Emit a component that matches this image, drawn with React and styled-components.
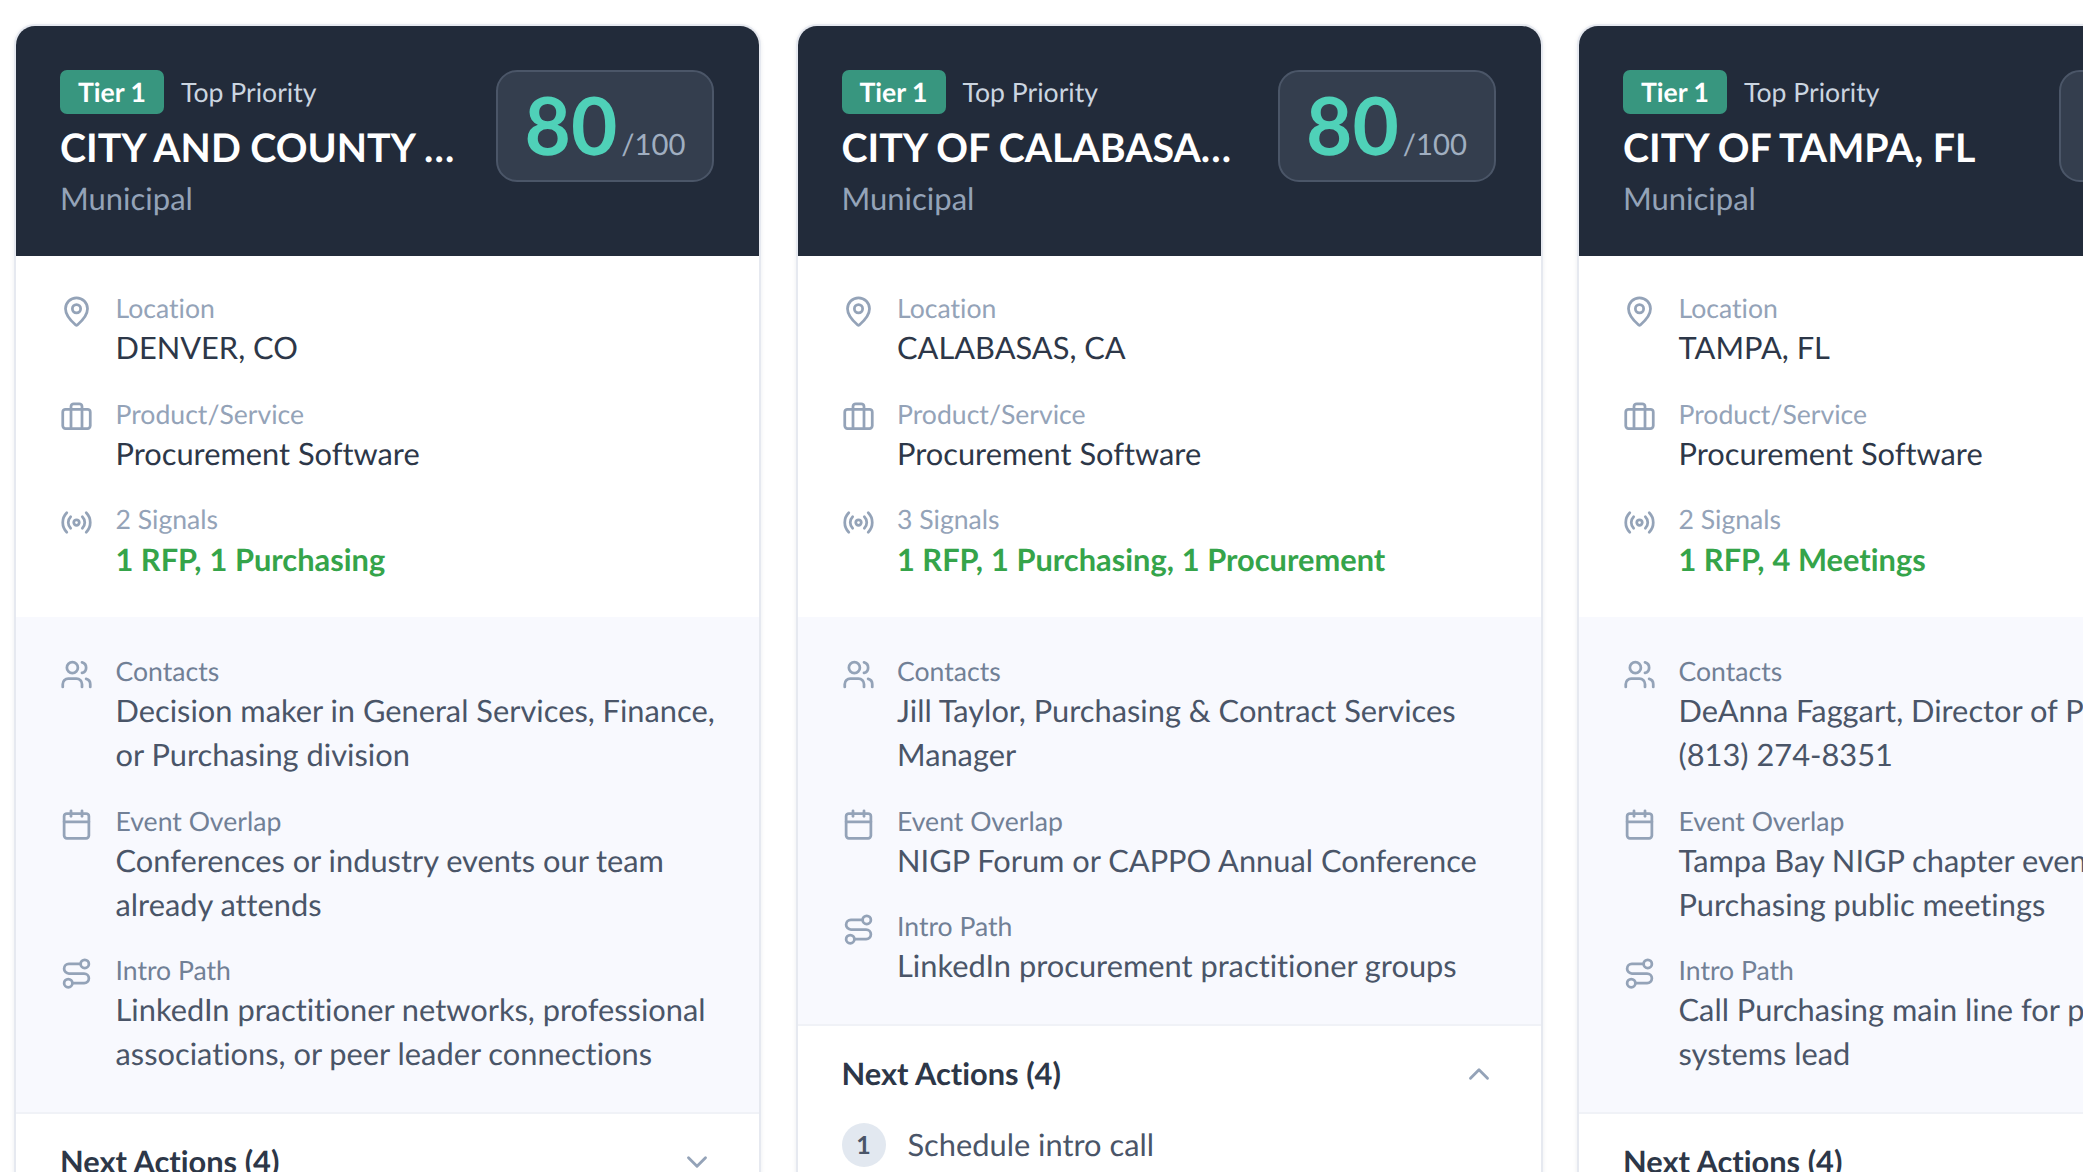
import React from "react";
import styled, { createGlobalStyle } from "styled-components";
import {
  MapPin,
  Briefcase,
  Radio,
  Users,
  Calendar,
  Route,
  ChevronUp,
  ChevronDown,
} from "lucide-react";

const GlobalStyle = createGlobalStyle`
  html, body {
    margin: 0;
    height: 100%;
    overflow: hidden;
    background: #fff;
    font-family: "Lato", "Liberation Sans", sans-serif;
    text-rendering: geometricPrecision;
    font-variant-ligatures: none;
  }
`;

const Board = styled.div`
  display: flex;
  align-items: flex-start;
  gap: 34.5px;
  padding: 24px 14px;
`;

const Card = styled.article`
  flex: 0 0 747px;
  box-sizing: border-box;
  background: #fff;
  border: 2px solid #e6e9f0;
  border-radius: 21px;
  box-shadow: 0 1px 4px rgba(30, 41, 59, 0.08);
  overflow: hidden;
`;

const Header = styled.header`
  display: flex;
  justify-content: space-between;
  gap: 33px;
  height: 230px;
  box-sizing: border-box;
  padding: 44px 45px 0 44px;
  background: #222b3a;
`;

const HeaderText = styled.div`
  flex: 1;
  min-width: 0;
`;

const TierRow = styled.div`
  display: flex;
  align-items: center;
  gap: 17px;
`;

const TierBadge = styled.span`
  height: 44px;
  padding: 0 18px;
  display: flex;
  align-items: center;
  border-radius: 7px;
  background: #38967f;
  color: #fff;
  font-size: 26.6px;
  font-weight: 700;
`;

const Priority = styled.span`
  color: #cbd5e0;
  font-size: 26.6px;
`;

const Title = styled.h2`
  margin: 8px 0 0;
  color: #fff;
  font-size: 39.3px;
  line-height: 52px;
  font-weight: 700;
  white-space: nowrap;
  overflow: hidden;
  text-overflow: ellipsis;
`;

const Kind = styled.div`
  margin-top: 2px;
  color: #94a3b8;
  font-size: 31px;
  line-height: 44px;
`;

const ScoreBox = styled.div`
  flex: 0 0 218px;
  height: 112px;
  box-sizing: border-box;
  display: flex;
  align-items: baseline;
  justify-content: center;
  gap: 4px;
  border: 2px solid #4b5668;
  border-radius: 21px;
  background: #343e4e;
  line-height: 107px;
`;

const ScoreValue = styled.span`
  color: #4fd1b8;
  font-size: 80px;
  font-weight: 700;
`;

const ScoreMax = styled.span`
  color: #a0aec0;
  font-size: 29.3px;
`;

const Section = styled.section`
  display: flex;
  flex-direction: column;
  gap: 25.5px;
  padding: ${(p) => (p.$muted ? "36px 20px 35.5px 44px" : "34px 20px 35px 44px")};
  background: ${(p) => (p.$muted ? "#f8f9fe" : "#fff")};
`;

const Row = styled.div`
  display: flex;
  gap: 22.5px;
`;

const IconSlot = styled.span`
  flex: 0 0 33px;
  height: 33px;
  margin-top: 5px;
  color: #94a3b8;
`;

const Label = styled.div`
  color: ${(p) => (p.$muted ? "#718096" : "#94a3b8")};
  font-size: 26.6px;
  line-height: 36px;
`;

const Value = styled.div`
  color: ${(p) => (p.$muted ? "#4a5568" : "#2d3748")};
  font-size: 30.8px;
  line-height: 44px;
  white-space: pre-line;
`;

const SignalList = styled.div`
  display: flex;
  gap: 8px;
  margin-top: 1px;
  color: #35a44a;
  font-size: 30.8px;
  line-height: 44px;
  font-weight: 700;
`;

const Actions = styled.section`
  padding: 26px 45px 80px 44px;
  border-top: 2px solid #f0f2f7;
`;

const ActionsHeader = styled.div`
  display: flex;
  justify-content: space-between;
  align-items: center;
  height: 44px;
  color: #2d3748;
  font-size: 30.8px;
  font-weight: 700;
  svg {
    color: #94a3b8;
  }
`;

const ActionItem = styled.div`
  display: flex;
  align-items: center;
  gap: 22px;
  margin-top: 27px;
  color: #4a5568;
  font-size: 30.8px;
`;

const ActionNumber = styled.span`
  flex: 0 0 44px;
  height: 44px;
  display: flex;
  align-items: center;
  justify-content: center;
  border-radius: 50%;
  background: #e2e8f0;
  font-size: 25px;
  font-weight: 700;
`;

const cards = [
  {
    title: "CITY AND COUNTY OF DENVER, CO",
    location: "DENVER, CO",
    signalCount: "2 Signals",
    signals: ["1 RFP,", "1 Purchasing"],
    contacts: "Decision maker in General Services, Finance,\nor Purchasing division",
    events: "Conferences or industry events our team\nalready attends",
    intro: "LinkedIn practitioner networks, professional\nassociations, or peer leader connections",
  },
  {
    title: "CITY OF CALABASAS, CA",
    location: "CALABASAS, CA",
    signalCount: "3 Signals",
    signals: ["1 RFP,", "1 Purchasing,", "1 Procurement"],
    contacts: "Jill Taylor, Purchasing & Contract Services\nManager",
    events: "NIGP Forum or CAPPO Annual Conference",
    intro: "LinkedIn procurement practitioner groups",
    open: true,
  },
  {
    title: "CITY OF TAMPA, FL",
    location: "TAMPA, FL",
    signalCount: "2 Signals",
    signals: ["1 RFP,", "4 Meetings"],
    contacts: "DeAnna Faggart, Director of Purchasing,\n(813) 274-8351",
    events: "Tampa Bay NIGP chapter events or\nPurchasing public meetings",
    intro: "Call Purchasing main line for procurement\nsystems lead",
  },
];

function InfoRow({ icon: Icon, label, muted, children }) {
  return (
    <Row>
      <IconSlot>
        <Icon size={33} strokeWidth={2} />
      </IconSlot>
      <div>
        <Label $muted={muted}>{label}</Label>
        {children}
      </div>
    </Row>
  );
}

function LeadCard({ card }) {
  return (
    <Card>
      <Header>
        <HeaderText>
          <TierRow>
            <TierBadge>Tier 1</TierBadge>
            <Priority>Top Priority</Priority>
          </TierRow>
          <Title>{card.title}</Title>
          <Kind>Municipal</Kind>
        </HeaderText>
        <ScoreBox>
          <ScoreValue>80</ScoreValue>
          <ScoreMax>/100</ScoreMax>
        </ScoreBox>
      </Header>

      <Section>
        <InfoRow icon={MapPin} label="Location">
          <Value>{card.location}</Value>
        </InfoRow>
        <InfoRow icon={Briefcase} label="Product/Service">
          <Value>Procurement Software</Value>
        </InfoRow>
        <InfoRow icon={Radio} label={card.signalCount}>
          <SignalList>
            {card.signals.map((s) => (
              <span key={s}>{s}</span>
            ))}
          </SignalList>
        </InfoRow>
      </Section>

      <Section $muted>
        <InfoRow icon={Users} label="Contacts" muted>
          <Value $muted>{card.contacts}</Value>
        </InfoRow>
        <InfoRow icon={Calendar} label="Event Overlap" muted>
          <Value $muted>{card.events}</Value>
        </InfoRow>
        <InfoRow icon={Route} label="Intro Path" muted>
          <Value $muted>{card.intro}</Value>
        </InfoRow>
      </Section>

      <Actions>
        <ActionsHeader>
          <span>Next Actions (4)</span>
          {card.open ? <ChevronUp size={34} /> : <ChevronDown size={34} />}
        </ActionsHeader>
        {card.open && (
          <ActionItem>
            <ActionNumber>1</ActionNumber>
            <span>Schedule intro call</span>
          </ActionItem>
        )}
      </Actions>
    </Card>
  );
}

export default function App() {
  return (
    <Board>
      <GlobalStyle />
      {cards.map((card) => (
        <LeadCard key={card.title} card={card} />
      ))}
    </Board>
  );
}
